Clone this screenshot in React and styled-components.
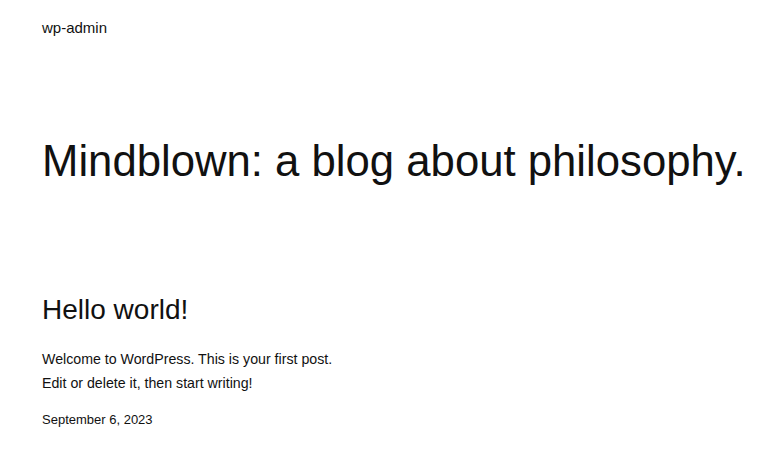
import React from 'react';
import styled, { createGlobalStyle } from 'styled-components';

const GlobalStyle = createGlobalStyle`
  body {
    margin: 0;
    background: #fff;
    color: #111;
    font-family: "Liberation Sans", Arial, sans-serif;
  }
`;

const Page = styled.div`
  padding: 0 42px;
`;

const Header = styled.header`
  padding-top: 19px;
  font-size: 15px;
  line-height: 18px;
`;

const SiteTitle = styled.h1`
  margin: 98px 0 0;
  font-size: 43.7px;
  font-weight: 400;
  line-height: 1.2;
  white-space: nowrap;
`;

const Post = styled.article`
  margin-top: 106px;
`;

const PostTitle = styled.h2`
  margin: 0;
  font-size: 28px;
  font-weight: 400;
  line-height: 1.2;
`;

const Excerpt = styled.p`
  margin: 20px 0 0;
  font-size: 14.2px;
  line-height: 24px;
`;

const PostDate = styled.time`
  display: block;
  margin-top: 15px;
  font-size: 13px;
  line-height: 20px;
`;

export default function App() {
  return (
    <>
      <GlobalStyle />
      <Page>
        <Header>wp-admin</Header>
        <SiteTitle>Mindblown: a blog about philosophy.</SiteTitle>
        <Post>
          <PostTitle>Hello world!</PostTitle>
          <Excerpt>
            Welcome to WordPress. This is your first post.
            <br />
            Edit or delete it, then start writing!
          </Excerpt>
          <PostDate>September 6, 2023</PostDate>
        </Post>
      </Page>
    </>
  );
}
